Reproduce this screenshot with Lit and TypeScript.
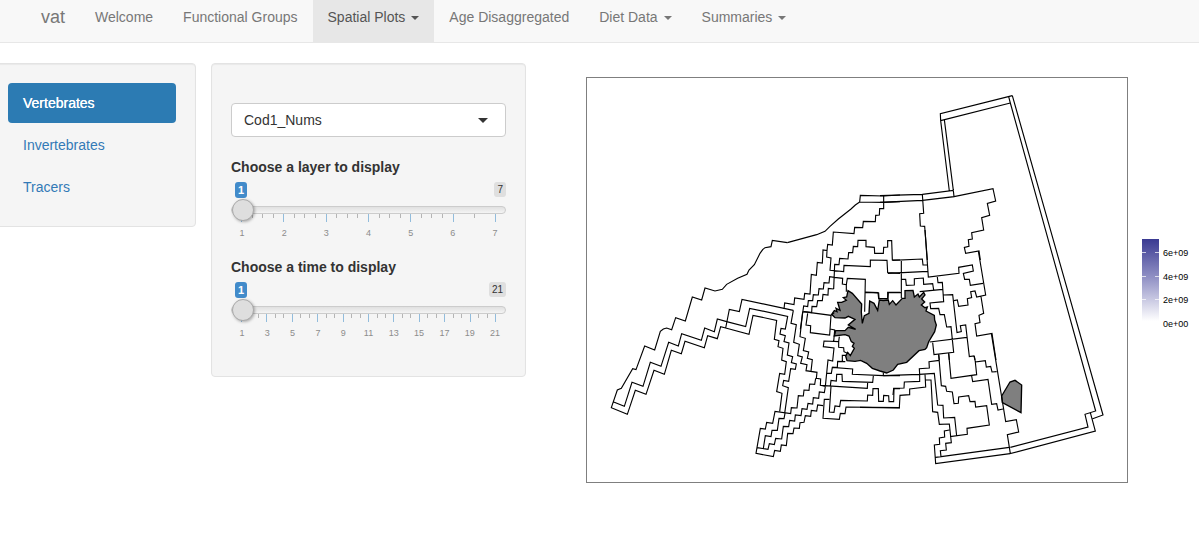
import { LitElement, html, css, svg } from "lit";
import { customElement, property, state } from "lit/decorators.js";
import { classMap } from "lit/directives/class-map.js";

interface Sheet {
  x: number;
  y: number;
  d: string;
}

// Box boundaries, one sheet per area; every unit is a third of a map unit.
const SHEETS: Sheet[] = [
  {
    x: 600,
    y: 230,
    d: `M562 38L517 31 513 50 495 53 488 59 480 70 463 104 447 120 441 133 413 145 380 163 367 178 345 183 315 174 305 210 277 201 256 273 227 263 215 299 200 294 190 297 181 304 164 360 134 348 108 419 98 416 64 475 52 480 34 533 82 553 106 481 138 493 162 421 193 433 214 361 244 371 255 334 313 353 323 317 352 326 362 290 377 294 447 313 459 256 530 271 523 328 537 332 534 350 549 355 545 390 559 395 554 433 539 430 530 485 546 490 539 545
    M41 516L73 529 96 457 129 469 151 397 183 409 206 337 235 348 245 311 304 331 314 294 343 305 352 267 380 275 437 290 449 235 563 259 556 297 543 295 540 312 556 317 552 335 567 339 562 375 578 380 574 398 589 402 586 418 572 416 566 454 551 451 548 467 565 473 554 550
    M377 294L388 238 418 245 426 208 580 241`,
  },
  {
    x: 750,
    y: 180,
    d: `M450 45L401 48 331 46 329 66 401 67 450 65
    M329 66L316 75 303 87 265 117 240 139 225 154 200 164 112 188
    M401 48V86H389L388 105 377 106 376 125 340 124 338 143 314 142 312 161 250 156 247 195 233 193 231 212 219 210 217 249 202 247 199 286 184 283 180 342 164 340 162 358 134 354 132 374 104 369 102 387
    M231 212L230 231 243 234 240 271 281 275 282 256 361 260 361 240 411 241 413 278 450 280
    M251 327L254 253 267 254 269 235 294 237 296 218 308 218 310 199 323 200 324 181H348V200L373 202 374 220H400L401 202 413 201V182H425L427 240H450
    M251 327L235 325 234 345 219 343 217 362 203 362 200 380 186 379 185 398 159 395
    M253 292L239 290 237 309 222 308 220 327 207 326 205 345 190 344 188 362 175 362 173 380 161 378 151 448
    M253 292L278 295 277 312 289 314V335M289 314L292 295 346 298 344 395
    M346 337L386 339 387 356 413 357V337H450`,
  },
  {
    x: 750,
    y: 310,
    d: `M130 1L123 40 139 44 131 97 148 103 143 137 157 141 152 160 171 164 168 182 201 187
    M158 5L150 80 166 85 160 122 176 126 172 145 187 149 183 184 201 187 199 205 212 207 211 226 226 229
    M176 7L243 16 239 75 181 68 182 47 168 45 173 10
    M185 8L161 5M243 16L253 8M240 57L254 60 251 95
    M197 205L194 223 179 222 177 241 162 240 160 258 145 257 141 294 124 293 122 311 75 304 68 340 50 337 46 357 31 355 18 430 70 440 74 421 91 424 94 405 109 407 113 370 129 371 132 354 148 355 150 338 162 337 166 317 182 319 184 301 200 303 203 285 219 287
    M226 230L223 248 208 246 206 265 190 263 188 282 174 280 171 298 156 296 153 317 136 315 134 333 119 331 116 350 100 349 95 387 77 385 73 404 58 401 54 418 22 413
    M105 310L102 326 87 325 82 361 66 361 63 380 46 377 40 415
    M238 268H223L219 325 268 328 271 310 285 311 288 291 450 293
    M243 229L238 306 252 307 255 288 269 290 272 271 352 273 353 255 368 256 369 236H385L386 274H400L401 256 416 257 417 275H431L432 236H450
    M211 226L352 235 353 216M241 229L243 211 259 213 260 193H276L277 214 368 217 370 198
    M226 229L234 150 248 153 252 114 220 110 222 93 266 95 268 80M266 95V112L281 113 282 125 292 130
    M450 197H400L307 193 308 177 247 172 244 190 231 190M247 172H262L263 154 286 155M277 155V136H289`,
  },
  {
    x: 880,
    y: 80,
    d: `M0 347L127 343 220 331 222 350 128 361 0 367
    M127 343L131 400 119 401 121 438 134 439 142 540
    M208 333L182 122 181 101 397 47M182 122L391 69M193 119L220 331
    M222 350L339 326 347 363 322 370 329 406 305 413 311 450 275 458 277 477 265 479 267 499 253 502 257 520 297 513 301 540`,
  },
  {
    x: 860,
    y: 230,
    d: `M195 0L205 141 297 130 296 112 337 105 340 123 310 130 314 148 328 148 331 166 369 160
    M355 63L377 195 350 201 345 183 332 185 335 203 322 206 324 225 296 229 292 210 282 212
    M363 200L371 250 357 256 360 278 345 281 350 318 396 310 408 390
    M97 91L187 87 189 105H202M84 130L203 124M124 91V205
    M124 148H137L139 166 163 165V146L190 144 191 163 218 161 221 180
    M232 141L234 158 247 157 251 215 210 219 212 236 236 235 240 254 253 254 260 291 273 290 281 367 222 374 218 338
    M179 185L248 178M249 195L278 194 291 308 304 305 301 287 317 285 328 380 342 378 345 390
    M321 322L209 336M236 373L238 390M266 370L268 390
    M15 186L54 188 56 206H84L85 188 124 187`,
  },
  {
    x: 860,
    y: 340,
    d: `M236 43L244 137 257 139 260 154 277 156 282 191 295 190 296 171 326 167 330 185 345 184 347 201 380 197 388 255 321 265 322 283 270 290
    M266 40L273 115 350 104 346 66 376 62 379 81 392 79 396 96 410 95
    M343 48L346 66M335 108L338 125 384 118 395 193 410 191 414 210 429 207
    M238 61L207 65 208 84 178 86 179 103M70 107L178 103 223 100 233 195 249 196 251 234 284 232 290 288
    M195 103L196 120 213 120 218 215 233 217 238 253 268 252 274 308 257 310 259 330 241 332 243 350
    M179 103V124L133 126 132 144 101 145 99 165
    M196 120L197 141 149 147V164L120 166 118 204 0 202
    M268 270L253 273 254 291 238 294 239 313 223 315 227 371 450 341M227 352L448 322M70 98V107`,
  },
  {
    x: 980,
    y: 80,
    d: `M97 47L369 1005 338 1016M86 50L91 69 347 993 315 1003 324 1041 91 1102
    M331 998L346 1053 91 1121 82 1064 116 1056 109 1019 77 1025 34 760`,
  },
];

const LAND: Sheet[] = [
  {
    x: 825,
    y: 275,
    d: `M69 47L82 55 110 87 109 112 112 145 118 122 132 115 134 78 147 85 158 106 163 75 175 77 190 75 193 88 203 77 213 90 232 70H240V47L264 46 268 66 279 57 283 66 296 52 300 60 290 72 299 81 289 90 300 98 307 96 303 108 328 121 329 135 334 150 329 170 311 200 305 218 300 223 282 227 245 262 218 268 205 285 185 294 165 288 142 280 125 265 107 256 90 259 66 257 62 243 68 232 76 242 88 220 82 214 87 205 79 200 72 183 60 179 28 183 32 167 60 167 70 157 92 163 70 150 90 133 70 124 60 129 30 128 20 118 28 107 36 110 33 100 45 106 38 82 50 82 64 76 55 68 65 66Z`,
  },
  { x: 980, y: 80, d: `M65 948L90 906 105 901 125 915 123 998 67 968Z` },
];

@customElement("tick-slider")
export class TickSlider extends LitElement {
  @property() label = "";
  @property({ type: Number }) max = 7;
  @property({ type: Number }) step = 1;
  @property({ attribute: false }) minors: number[] = [];
  @state() private value = 1;

  static styles = css`
    :host {
      display: block;
      height: 85px;
      margin-bottom: 15px;
    }
    .label {
      display: block;
      margin-bottom: 5px;
      font-weight: bold;
    }
    .badges {
      display: flex;
      justify-content: space-between;
      align-items: flex-start;
      height: 17px;
      padding-left: 4px;
    }
    .badge {
      padding: 0 3px;
      border-radius: 3px;
      font-size: 10px;
      line-height: 15px;
      background: #dfdfdf;
      color: #333;
    }
    .current {
      padding: 0 3px;
      font-size: 11px;
      line-height: 16px;
      font-weight: bold;
      background: #428bca;
      color: #fff;
    }
    .range {
      appearance: none;
      display: block;
      position: relative;
      z-index: 1;
      width: 100%;
      height: 22px;
      margin: 0;
      background: none;
    }
    .range::-webkit-slider-runnable-track {
      height: 8px;
      box-sizing: border-box;
      border: 1px solid #ccc;
      border-radius: 8px;
      background: linear-gradient(#ddd, #fff);
      background: linear-gradient(#e0e0e0, #f4f4f4);
    }
    .range::-webkit-slider-thumb {
      appearance: none;
      box-sizing: border-box;
      width: 22px;
      height: 22px;
      margin-top: -8px;
      border: 1px solid #aaa;
      border-radius: 50%;
      background: #dedede;
      box-shadow: 1px 1px 3px rgba(0, 0, 0, 0.3);
    }
    .ticks {
      display: flex;
      height: 8px;
      margin-top: -7px;
      padding: 0 10px;
    }
    .interval {
      flex: 1;
      display: flex;
      justify-content: space-evenly;
      border-left: 1px solid #92bcdc;
    }
    .minor {
      width: 1px;
      height: 4px;
      background: #b5b5b5;
    }
    .last {
      width: 1px;
      background: #92bcdc;
    }
    .numbers {
      display: flex;
      justify-content: space-between;
      margin-top: 5px;
      padding: 0 11px;
      font-size: 9px;
      line-height: 12px;
      color: #8c8c8c;
    }
    .number {
      display: flex;
      justify-content: center;
      width: 0;
    }
  `;

  render() {
    const numbers: number[] = [];
    for (let n = 1; n <= this.max; n += this.step) numbers.push(n);
    return html`
      <label class="label" for="range">${this.label}</label>
      <div class="badges">
        <span class="badge current">${this.value}</span>
        <span class="badge">${this.max}</span>
      </div>
      <input
        class="range"
        id="range"
        type="range"
        min="1"
        max=${this.max}
        .value=${String(this.value)}
        @input=${(e: Event) => (this.value = Number((e.target as HTMLInputElement).value))}
      />
      <div class="ticks">
        ${this.minors.map(
          (count) => html`<span class="interval">
            ${Array.from({ length: count }, () => html`<span class="minor"></span>`)}
          </span>`
        )}
        <span class="last"></span>
      </div>
      <div class="numbers">
        ${numbers.map((n) => html`<span class="number">${n}</span>`)}
      </div>
    `;
  }
}

@customElement("region-map")
export class RegionMap extends LitElement {
  static styles = css`
    :host {
      display: flex;
      align-items: center;
    }
    .map {
      flex: 1;
      min-width: 0;
      display: block;
    }
    .frame {
      fill: #fff;
      stroke: #7f7f7f;
    }
    .lines {
      fill: none;
      stroke: #000;
      stroke-width: 3.4;
    }
    .land {
      fill: #7f7f7f;
      stroke: #000;
      stroke-width: 4;
    }
    .legend {
      display: flex;
      gap: 4px;
      margin-left: 14px;
    }
    .scale {
      display: block;
      width: 17px;
      height: 82px;
    }
    .values {
      display: flex;
      flex-direction: column;
      justify-content: space-between;
      width: 27px;
      height: 83px;
      margin: 8px 0 -9px;
      font-size: 9px;
      line-height: 12px;
      color: #000;
    }
  `;

  render() {
    const place = (s: Sheet) => `translate(${s.x} ${s.y}) scale(0.33333)`;
    return html`
      <svg class="map" viewBox="586 77 542 406" role="img" aria-label="Map of model boxes">
        <rect class="frame" x="586.5" y="77.5" width="541" height="405" />
        ${LAND.map((s) => svg`<path class="land" transform=${place(s)} d=${s.d} />`)}
        ${SHEETS.map((s) => svg`<path class="lines" transform=${place(s)} d=${s.d} />`)}
      </svg>
      <div class="legend">
        <svg class="scale" viewBox="0 0 17 82">
          <defs>
            <linearGradient id="ramp" x1="0" y1="0" x2="0" y2="1">
              <stop offset="0" stop-color="#3a3a92" />
              <stop offset="0.5" stop-color="#9797c8" />
              <stop offset="1" stop-color="#fff" />
            </linearGradient>
          </defs>
          <rect width="17" height="82" fill="url(#ramp)" />
          <path
            d="M0 13.5h4M13 13.5h4M0 37.5h4M13 37.5h4M0 60.5h4M13 60.5h4"
            stroke="#fff"
            stroke-opacity="0.7"
          />
        </svg>
        <div class="values">
          <span>6e+09</span><span>4e+09</span><span>2e+09</span><span>0e+00</span>
        </div>
      </div>
    `;
  }
}

@customElement("app-root")
export class AppRoot extends LitElement {
  @state() private group = "Vertebrates";

  private tabs = [
    { name: "Welcome" },
    { name: "Functional Groups" },
    { name: "Spatial Plots", menu: true, active: true },
    { name: "Age Disaggregated" },
    { name: "Diet Data", menu: true },
    { name: "Summaries", menu: true },
  ];

  static styles = css`
    :host {
      display: block;
      overflow-x: hidden;
      min-height: 100vh;
      background: #fff;
      color: #333;
      font: 14px/20px "Liberation Sans", Arial, sans-serif;
    }
    .navbar {
      display: flex;
      padding-left: 26px;
      background: #f8f8f8;
      box-shadow: inset 0 -1px #e7e7e7;
    }
    .brand,
    .tab {
      padding: 7px 15px 16px;
      color: #777;
      text-decoration: none;
      white-space: nowrap;
    }
    .brand {
      font-size: 18px;
    }
    .tab.active {
      background: #e7e7e7;
      color: #555;
    }
    .caret {
      display: inline-block;
      margin-left: 6px;
      vertical-align: middle;
      border-top: 4px solid;
      border-left: 4px solid transparent;
      border-right: 4px solid transparent;
    }
    .main {
      display: grid;
      grid-template-columns: minmax(0, 208fr) minmax(0, 315fr) minmax(0, 658fr);
      align-items: start;
      gap: 15px;
      margin-left: -12px;
      padding-top: 20px;
    }
    .well {
      padding: 19px;
      border: 1px solid #e3e3e3;
      border-radius: 4px;
      background: #f5f5f5;
      box-shadow: inset 0 1px 1px rgba(0, 0, 0, 0.05);
    }
    .pills {
      display: flex;
      flex-direction: column;
      gap: 2px;
    }
    .pill {
      padding: 10px 15px;
      border-radius: 4px;
      color: #337ab7;
      text-decoration: none;
    }
    .pill.active {
      background: #2c7bb3;
      color: #fff;
      text-shadow: 0 0 0 #fff;
    }
    .picker {
      display: grid;
      align-items: center;
      margin: 20px 0;
    }
    .select {
      grid-area: 1 / 1;
      appearance: none;
      width: 100%;
      height: 34px;
      padding: 0 12px;
      border: 1px solid #ccc;
      border-radius: 4px;
      background: #fff;
      color: #333;
      font: inherit;
    }
    .arrow {
      grid-area: 1 / 1;
      justify-self: end;
      margin-right: 18px;
      border-top: 5px solid #333;
      border-left: 5px solid transparent;
      border-right: 5px solid transparent;
      pointer-events: none;
    }
    .plot {
      margin: 14px 9px 0 45px;
    }
  `;

  render() {
    return html`
      <nav class="navbar">
        <a class="brand" href="#">vat</a>
        ${this.tabs.map(
          (t) => html`<a class=${classMap({ tab: true, active: !!t.active })} href="#"
            >${t.name}${t.menu ? html`<span class="caret"></span>` : ""}</a
          >`
        )}
      </nav>
      <main class="main">
        <nav class="well pills">
          ${["Vertebrates", "Invertebrates", "Tracers"].map(
            (name) => html`<a
              class=${classMap({ pill: true, active: name === this.group })}
              href="#"
              @click=${(e: Event) => {
                e.preventDefault();
                this.group = name;
              }}
              >${name}</a
            >`
          )}
        </nav>
        <form class="well">
          <div class="picker">
            <select class="select" aria-label="Variable">
              <option>Cod1_Nums</option>
            </select>
            <span class="arrow"></span>
          </div>
          <tick-slider
            label="Choose a layer to display"
            .max=${7}
            .minors=${[3, 3, 3, 3, 3, 1]}
          ></tick-slider>
          <tick-slider
            label="Choose a time to display"
            .max=${21}
            .step=${2}
            .minors=${[2, 2, 2, 2, 2, 2, 2, 2, 2, 2]}
          ></tick-slider>
        </form>
        <region-map class="plot"></region-map>
      </main>
    `;
  }
}
